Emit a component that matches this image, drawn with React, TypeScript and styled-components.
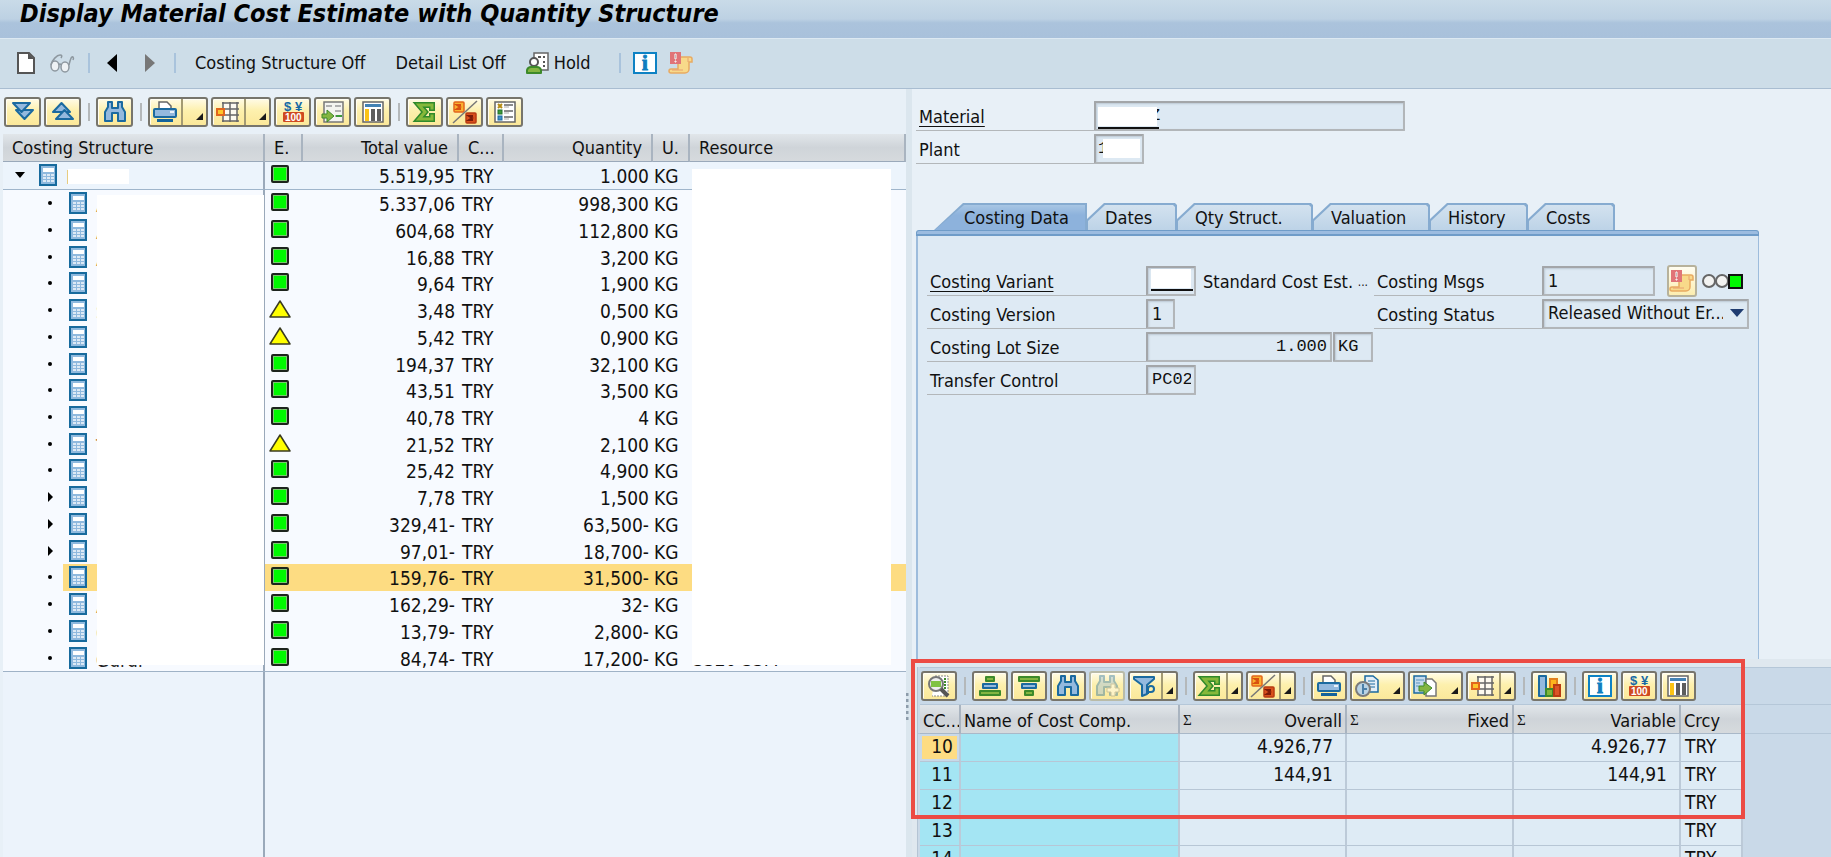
import React from 'react';
import styled, { createGlobalStyle, css } from 'styled-components';

const GlobalStyle = createGlobalStyle`
  *, *::before, *::after { box-sizing: border-box; }
  body {
    margin: 0;
    background: #e8f0f7;
    color: #111;
    font-family: "DejaVu Sans Condensed", "Noto Sans", sans-serif;
    font-size: 18px;
    line-height: 24px;
  }
  button, input, select { font: inherit; color: inherit; }
  button { cursor: pointer; }
  svg { overflow: visible; }
`;

/* ---------- page frame ---------- */

const Page = styled.div`
  display: flex;
  flex-direction: column;
  height: 100vh;
  overflow: hidden;
`;

const TitleBar = styled.header`
  flex: none;
  height: 39px;
  padding: 0 20px;
  background: linear-gradient(#c9dbe8, #bdd1e3 50%, #abc3dc 60%, #a9c1db);
  border-bottom: 1px solid #dde9f2;
`;

const Title = styled.h1`
  margin: 0;
  font-size: 25px;
  line-height: 28px;
  font-weight: bold;
  font-style: italic;
  color: #000;
  white-space: nowrap;
`;

const AppToolbar = styled.div`
  flex: none;
  display: flex;
  align-items: center;
  height: 50px;
  padding: 0 16px 1px;
  background: #cddde8;
  border-bottom: 1px solid #a9bdd1;
`;

const FlatButton = styled.button<{ $before?: number }>`
  display: flex;
  align-items: center;
  gap: 4px;
  margin-left: ${(p) => p.$before ?? 0}px;
  padding: 0;
  border: 0;
  background: none;
  white-space: nowrap;
`;

const FlatRule = styled.span<{ $before: number }>`
  width: 2px;
  height: 20px;
  margin-left: ${(p) => p.$before}px;
  background: #a9c3dc;
`;

const Workspace = styled.main`
  flex: 1;
  min-height: 0;
  display: grid;
  grid-template-columns: minmax(0, 906fr) 6px minmax(0, 919fr);
`;

const Splitter = styled.div`
  display: flex;
  align-items: flex-end;
  padding-bottom: 137px;
  background: #dbe6ee;
`;

/* ---------- toolbars ---------- */

const ToolRow = styled.div<{ $detail?: boolean }>`
  flex: none;
  display: flex;
  gap: 3px;
  align-items: center;
  height: ${(p) => (p.$detail ? 38 : 45)}px;
  padding: 0 ${(p) => (p.$detail ? 1 : 4)}px;
  ${(p) =>
    p.$detail &&
    css`
      border-top: 1px solid #b5c7d8;
      border-bottom: 1px solid #b5c7d8;
    `}
`;

const ToolButton = styled.button<{ $wide?: boolean }>`
  display: flex;
  justify-content: center;
  align-items: flex-start;
  width: ${(p) => (p.$wide ? 37 : 36)}px;
  height: 30px;
  padding: 2px 0 0;
  border: 2px solid #77756c;
  border-radius: 3px;
  background: linear-gradient(#fffbe6, #fdf0ad 45%, #fbe89a);
  box-shadow: inset 1px 1px 0 #fffdf2;

  &:disabled {
    border-color: #b9bba8;
    cursor: default;
  }
  &:disabled svg {
    opacity: 0.4;
  }
`;

const MenuButton = styled(ToolButton)<{ $size: number }>`
  justify-content: flex-start;
  width: ${(p) => p.$size}px;
  padding-left: 3px;
  gap: 4px;
`;

const MenuArrow = styled.span<{ $divider?: boolean }>`
  display: flex;
  align-items: flex-end;
  justify-content: flex-end;
  align-self: stretch;
  flex: 1;
  margin-top: -2px;
  padding: 0 3px 5px 0;
  border-left: ${(p) => (p.$divider ? '2px solid #a39a73' : '0')};
`;

const ToolRule = styled.span`
  width: 2px;
  height: 18px;
  margin: 0 3px 0 4px;
  background: #b4b8ba;
`;

const MenuArrowSvg = styled.svg`
  width: 7px;
  height: 7px;
`;

const Corner = () => (
  <MenuArrowSvg viewBox="0 0 7 7" aria-hidden="true">
    <path d="M7 0V7H0z" fill="#1a1a1a" />
  </MenuArrowSvg>
);

const Icon24 = styled.svg`
  width: 24px;
  height: 22px;
  flex: none;
`;

/* ---------- icon drawings ---------- */

type IconProps = { children: React.ReactNode };
const Draw = ({ children }: IconProps) => (
  <Icon24 viewBox="0 0 24 22" aria-hidden="true">
    {children}
  </Icon24>
);

const blue = { fill: '#94b9de', stroke: '#1b6aa0', strokeWidth: 2, strokeLinejoin: 'round' as const };
const green = { fill: '#84b541', stroke: '#3d8a2a', strokeWidth: 2, strokeLinejoin: 'round' as const };

const ExpandIcon = () => (
  <Draw>
    <path d="M5 9h17l-8.500 9z" {...blue} />
    <path d="M2 2h17l-8.500 9z" {...blue} />
  </Draw>
);
const CollapseIcon = () => (
  <Draw>
    <path d="M2 11h17l-8.500-9z" {...blue} />
    <path d="M5 18h17l-8.500-9z" {...blue} />
  </Draw>
);
const FindShape = () => (
  <path d="M2 20V11L5 6V1h4v6h6V1h4v5l3 5v9h-7v-8h-6v8z" {...blue} />
);
const FindIcon = () => (
  <Draw>
    <FindShape />
  </Draw>
);
const FindNextIcon = () => (
  <Draw>
    <FindShape />
    <path d="M16 9h4v4h4v4h-4v4h-4v-4h-4v-4h4z" fill="#fff" stroke="#888" />
  </Draw>
);
const PrintIcon = () => (
  <Draw>
    <path d="M6 9V1h8l4 4v4z" fill="#fff" stroke="#666" strokeWidth="1.500" />
    <rect x="1" y="8" width="22" height="8" rx="1" {...blue} />
    <rect x="17" y="10" width="4" height="2" fill="#e9f2fa" />
    <rect x="4" y="18" width="16" height="3" fill="#13639b" />
  </Draw>
);
const LayoutIcon = () => (
  <Draw>
    <rect x="7" y="2" width="14" height="18" fill="#fdfaf0" />
    <path d="M6 2h17M9 8h14M9 14h14M6 20h17M7 1v6M7 14v7M14 1v20M21 1v20" fill="none" stroke="#666" strokeWidth="1.500" />
    <rect x="1" y="8" width="7" height="6" fill="#fdc62b" stroke="#e2661c" strokeWidth="2" />
  </Draw>
);
const CurrencyText = styled.text<{ $size: number }>`
  font-family: 'Liberation Sans', sans-serif;
  font-weight: bold;
  font-size: ${(p) => p.$size}px;
`;
const CurrencyIcon = () => (
  <Draw>
    <CurrencyText $size={13} x="3" y="10" fill="#1769a6">
      $
    </CurrencyText>
    <CurrencyText $size={13} x="14" y="10" fill="#1769a6">
      ¥
    </CurrencyText>
    <rect x="2" y="11" width="21" height="10" rx="1" fill="#cf4a20" />
    <CurrencyText $size={10} x="4" y="20" fill="#fff">
      100
    </CurrencyText>
  </Draw>
);
const ImportIcon = () => (
  <Draw>
    <rect x="3" y="1" width="19" height="20" fill="#f4f4f0" stroke="#777" strokeWidth="1.500" />
    <path d="M5 5h6M14 5h6M14 10h6M14 15h6" stroke="#b0b0b0" strokeWidth="2" />
    <path d="M15 15h6" stroke="#3d9a3a" strokeWidth="2" />
    <path d="M1 13h5V9l7 6-7 6v-4H1z" {...green} strokeWidth="1" />
  </Draw>
);
const ColumnsIcon = () => (
  <Draw>
    <rect x="2" y="1" width="20" height="20" fill="#fff" stroke="#666" strokeWidth="1.500" />
    <rect x="4" y="3" width="16" height="3" fill="#4382b4" />
    <rect x="4" y="8" width="4" height="12" fill="#fbc314" />
    <rect x="10" y="8" width="4" height="12" fill="#5d5d5d" />
    <rect x="16" y="8" width="4" height="12" fill="#5d5d5d" />
  </Draw>
);
const sumLine = 'M19 7V4H6l6 7-6 7h13v-3';
const SumIcon = () => (
  <Draw>
    <path d={sumLine} fill="none" stroke="#2f8a2b" strokeWidth="6" strokeLinecap="square" />
    <path d={sumLine} fill="none" stroke="#86b83a" strokeWidth="3" strokeLinecap="square" />
  </Draw>
);
const SubtotalIcon = () => (
  <Draw>
    <rect x="1" y="1" width="10" height="10" rx="1" fill="#f9b12f" stroke="#e2661c" strokeWidth="1.500" />
    <path d="M8 4H4l3 2-3 2h4" fill="none" stroke="#d8500f" strokeWidth="2" />
    <rect x="13" y="12" width="10" height="10" rx="1" fill="#d9501c" stroke="#b83b12" strokeWidth="1.500" />
    <path d="M20 15h-4l3 2-3 2h4" fill="none" stroke="#7d1c08" strokeWidth="2" />
    <path d="M0 22L24 0" stroke="#777" strokeWidth="1.500" />
  </Draw>
);
const ChecklistIcon = () => (
  <Draw>
    <rect x="2" y="1" width="20" height="20" fill="#fff" stroke="#666" strokeWidth="1.500" />
    <path d="M11 4h9M11 10h9M11 16h9" stroke="#666" strokeWidth="1.500" />
    <path d="M11 6h5M11 12h5M11 18h5" stroke="#aaa" />
    <path d="M5 3l4 4M9 3l-4 4" stroke="#b58b12" strokeWidth="2" />
    <rect x="5" y="9" width="4" height="4" fill="#3d9a3a" stroke="#20702a" />
    <rect x="5" y="15" width="4" height="4" fill="#3f8fc7" stroke="#1b6aa0" />
  </Draw>
);
const DetailsIcon = () => (
  <Draw>
    <path d="M8 1h13v20H5" fill="#fff" stroke="#888" strokeDasharray="2 1" />
    <path d="M18 3v12" stroke="#3d8a2a" strokeWidth="2" strokeDasharray="2 1" />
    <circle cx="9" cy="9" r="7" fill="#eee" stroke="#777" strokeWidth="2" />
    <path d="M4 6h10v6H4z" fill="#7fc241" />
    <path d="M14 14l7 7" stroke="#555" strokeWidth="4" />
  </Draw>
);
const SortUpIcon = () => (
  <Draw>
    <rect x="8" y="2" width="8" height="4" {...green} />
    <rect x="5" y="9" width="14" height="4" {...blue} />
    <rect x="2" y="16" width="20" height="4" {...green} />
  </Draw>
);
const SortDownIcon = () => (
  <Draw>
    <rect x="2" y="2" width="20" height="4" {...green} />
    <rect x="5" y="9" width="14" height="4" {...blue} />
    <rect x="8" y="16" width="8" height="4" {...green} />
  </Draw>
);
const FilterIcon = () => (
  <Draw>
    <path d="M1 2h20v2l-7 6v9l-5 2V10L1 4z" {...blue} />
    <path d="M15 19v-5a3 3 0 1 1 3 3h-3" fill="#fdf0ad" stroke="#1b6aa0" strokeWidth="2" />
  </Draw>
);
const ViewIcon = () => (
  <Draw>
    <path d="M10 1h8l5 4v12H10z" fill="#e3eef7" stroke="#1b6aa0" strokeWidth="1.500" />
    <path d="M13 6h7M13 9h7M13 12h7" stroke="#1b6aa0" />
    <circle cx="8" cy="14" r="7" fill="#b9d3e4" stroke="#7b7b7b" strokeWidth="2" />
    <path d="M8 9v10M8 14h4" stroke="#4b7fa8" strokeWidth="2" />
  </Draw>
);
const ExportIcon = () => (
  <Draw>
    <rect x="1" y="1" width="12" height="17" fill="#c4daed" stroke="#1b6aa0" strokeWidth="1.500" />
    <path d="M3 5h8M3 8h4M3 11h3" stroke="#5b94bf" />
    <path d="M13 4h6l4 4v13H13z" fill="#fff" stroke="#777" strokeWidth="1.500" />
    <path d="M6 11h5V7l8 6-8 7v-4H6z" {...green} strokeWidth="1" />
  </Draw>
);
const ChartIcon = () => (
  <Draw>
    <rect x="2" y="1" width="7" height="20" {...blue} />
    <rect x="13" y="4" width="7" height="10" fill="#fdb51c" stroke="#e2801c" strokeWidth="2" />
    <rect x="9" y="14" width="7" height="7" fill="#7fb53a" stroke="#3d8a2a" strokeWidth="2" />
    <rect x="17" y="10" width="6" height="11" fill="#dc5426" stroke="#b83b12" strokeWidth="2" />
  </Draw>
);
const InfoGlyph = styled.text`
  font-family: 'Liberation Serif', serif;
  font-weight: bold;
  font-size: 21px;
`;
const InfoIcon = () => (
  <Draw>
    <rect x="1" y="1" width="22" height="20" fill="#fff" stroke="#0e82c4" strokeWidth="2" />
    <InfoGlyph x="12" y="18" textAnchor="middle" fill="#0e7fc0" stroke="#0e7fc0">
      i
    </InfoGlyph>
  </Draw>
);
const LogIcon = () => (
  <Draw>
    <path
      d="M9 5h12a2 2 0 0 1 2 2v3h-3v7a4 4 0 0 1-4 4H2a2 2 0 0 1 0-4h7z"
      fill="#f8d98a"
      stroke="#e8aa62"
      strokeWidth="1.500"
    />
    <path d="M3 18h11M19 6v4" stroke="#e8a070" />
    <rect x="1" y="0" width="11" height="12" fill="#e07478" />
    <path d="M6 2h1v5H6zM6 9h1v1H6z" stroke="#fff" />
  </Draw>
);
const NewDocIcon = () => (
  <Icon24 viewBox="0 0 24 22" aria-hidden="true">
    <path d="M2 1h11l5 5v15H2z" fill="#fff" stroke="#555" strokeWidth="2" />
    <path d="M12 1v6h6z" fill="#555" />
  </Icon24>
);
const GlassesIcon = () => (
  <Draw>
    <g fill="none" stroke="#8d979f" strokeWidth="1.500">
      <ellipse cx="5" cy="14" rx="4" ry="5" fill="#eef2f5" />
      <ellipse cx="15" cy="15" rx="4" ry="5" fill="#eef2f5" />
      <path d="M9 13q1-2 2 0M1 13C2 8 7 3 10 3q3 0 1 3M19 13c1-4 2-9 4-8q1 1 0 3" />
    </g>
  </Draw>
);
const ArrowSvg = styled.svg`
  width: 10px;
  height: 18px;
`;
const HoldIcon = () => (
  <Draw>
    <rect x="8" y="1" width="14" height="17" fill="#fff" stroke="#666" strokeWidth="1.500" />
    <path d="M12 5h3M17 5h2M17 10h2M17 14h2" stroke="#555" strokeWidth="2" />
    <circle cx="8" cy="10" r="4" fill="#fff" stroke="#555" strokeWidth="2" />
    <path d="M1 21v-3q1-3 4-3h6q3 0 4 3v3z" {...green} />
  </Draw>
);

/* ---------- costing structure tree ---------- */

const Pane = styled.section`
  display: flex;
  flex-direction: column;
  min-width: 0;
  min-height: 0;
`;

const TreeArea = styled.div`
  position: relative;
  flex: 1;
  display: flex;
  flex-direction: column;
  min-height: 0;
  margin-left: 3px;
  background: #ecf3fb;
`;

const TreeTable = styled.table`
  width: 100%;
  height: 538px;
  table-layout: fixed;
  border-collapse: separate;
  border-spacing: 0;
  border-bottom: 1px solid #9fb2c6;
  background: #f7faff;
`;

const headCell = css`
  overflow: hidden;
  font-weight: normal;
  white-space: nowrap;
  background: linear-gradient(#e1e6ea, #cfd4d9 50%, #d6dadd);
  border-right: 2px solid #a9b4c0;
`;

const TreeHead = styled.th<{ $align?: string }>`
  ${headCell}
  height: 28px;
  padding: 0 9px;
  text-align: ${(p) => p.$align ?? 'left'};
  border-bottom: 1px solid #9aa9ba;
`;

const TreeRow = styled.tr<{ $root?: boolean; $selected?: boolean }>`
  background: ${(p) => (p.$selected ? '#fddc82' : p.$root ? '#ecf4fc' : 'transparent')};
  td {
    border-bottom: ${(p) => (p.$root ? '1px solid #9fb5cb' : '0')};
  }
`;

const TreeCell = styled.td<{ $align?: string; $unit?: boolean }>`
  padding: 2px 4px 0 ${(p) => (p.$unit ? 1 : 3)}px;
  font-size: 19px;
  text-align: ${(p) => p.$align ?? 'left'};
  white-space: nowrap;
  overflow: hidden;
`;

const NodeCell = styled.td<{ $root?: boolean; $selected?: boolean }>`
  padding: 0 0 0 ${(p) => (p.$root ? 10 : 40)}px;
  overflow: hidden;
  border-right: 2px solid #9aa9ba;
  background: ${(p) => (p.$selected ? 'linear-gradient(90deg, #f7faff 60px, #fddc82 60px)' : 'none')};
`;

const NodeLine = styled.div`
  display: flex;
  align-items: center;
  height: 22px;
`;

const NodeText = styled.span<{ $dark?: boolean }>`
  padding: 4px 0 0 9px;
  font-size: 19px;
  color: ${(p) => (p.$dark ? '#222' : '#c58a50')};
`;

const StatusCell = styled.td`
  padding: 0 0 2px 6px;
  line-height: 0;
`;

const Cover = styled.div<{ $left: number; $top: number; $width: number; $height: number }>`
  position: absolute;
  left: ${(p) => p.$left}px;
  top: ${(p) => p.$top}px;
  width: ${(p) => p.$width}px;
  height: ${(p) => p.$height}px;
  background: #fff;
`;

const ColumnEdge = styled.div`
  flex: 1;
  width: 262px;
  border-right: 2px solid #9aa9ba;
`;

const MarkerSvg = styled.svg`
  width: 14px;
  height: 14px;
  margin-right: 12px;
  flex: none;
`;
const CalcSvg = styled.svg`
  width: 18px;
  height: 22px;
  flex: none;
`;
const StatusSvg = styled.svg`
  width: 20px;
  height: 18px;
`;
const DotsSvg = styled.svg`
  width: 3px;
  height: 28px;
`;

const Marker = ({ kind }: { kind: 'open' | 'closed' | 'leaf' }) => (
  <MarkerSvg viewBox="0 0 14 14" aria-hidden="true">
    {kind === 'open' && <path d="M2 4h10L7 10z" />}
    {kind === 'closed' && <path d="M5 2l5 5-5 5z" />}
    {kind === 'leaf' && <circle cx="7" cy="7" r="2" />}
  </MarkerSvg>
);

const CalcIcon = () => (
  <CalcSvg viewBox="0 0 18 22" aria-hidden="true">
    <rect x="1" y="1" width="16" height="20" fill="#8fb9de" stroke="#176a9d" strokeWidth="2" />
    <rect x="4" y="4" width="11" height="4" fill="#fff" />
    <path d="M4 11h11M4 14h11M4 17h11" stroke="#dce9f5" strokeWidth="2" strokeDasharray="3 1" />
  </CalcSvg>
);

const Status = ({ warn }: { warn?: boolean }) => (
  <StatusSvg viewBox="0 0 20 18" role="img" aria-label={warn ? 'Warning' : 'OK'}>
    {warn ? (
      <path d="M9 1L19 17H-1z" fill="#ffff00" stroke="#3a3a20" strokeWidth="1.500" strokeLinejoin="round" />
    ) : (
      <>
        <rect x="1" y="1" width="16" height="16" rx="1" fill="#7cc96f" stroke="#1d241d" strokeWidth="2" />
        <rect x="3" y="3" width="12" height="12" fill="#00fa00" />
      </>
    )}
  </StatusSvg>
);

type Node = {
  kind: 'open' | 'closed' | 'leaf';
  text: string;
  total: string;
  qty: string;
  warn?: boolean;
  selected?: boolean;
};

const nodes: Node[] = [
  { kind: 'open', text: 'I', total: '5.519,95', qty: '1.000' },
  { kind: 'leaf', text: 'A', total: '5.337,06', qty: '998,300' },
  { kind: 'leaf', text: 'A', total: '604,68', qty: '112,800' },
  { kind: 'leaf', text: 'A', total: '16,88', qty: '3,200' },
  { kind: 'leaf', text: 'I', total: '9,64', qty: '1,900' },
  { kind: 'leaf', text: 'S', total: '3,48', qty: '0,500', warn: true },
  { kind: 'leaf', text: 'I', total: '5,42', qty: '0,900', warn: true },
  { kind: 'leaf', text: 'I', total: '194,37', qty: '32,100' },
  { kind: 'leaf', text: 'I', total: '43,51', qty: '3,500' },
  { kind: 'leaf', text: 'I', total: '40,78', qty: '4' },
  { kind: 'leaf', text: 'T', total: '21,52', qty: '2,100', warn: true },
  { kind: 'leaf', text: 'I', total: '25,42', qty: '4,900' },
  { kind: 'closed', text: 'I', total: '7,78', qty: '1,500' },
  { kind: 'closed', text: 'I', total: '329,41-', qty: '63,500-' },
  { kind: 'closed', text: 'I', total: '97,01-', qty: '18,700-' },
  { kind: 'leaf', text: 'I', total: '159,76-', qty: '31,500-', selected: true },
  { kind: 'leaf', text: 'A', total: '162,29-', qty: '32-' },
  { kind: 'leaf', text: 'G', total: '13,79-', qty: '2,800-' },
  { kind: 'leaf', text: 'Gurur', total: '84,74-', qty: '17,200-' },
];

const CostingTree = () => (
  <Pane>
    <ToolRow>
      <ToolButton $wide aria-label="Expand">
        <ExpandIcon />
      </ToolButton>
      <ToolButton $wide aria-label="Collapse">
        <CollapseIcon />
      </ToolButton>
      <ToolRule />
      <ToolButton $wide aria-label="Find">
        <FindIcon />
      </ToolButton>
      <ToolRule />
      <MenuButton $size={60} aria-label="Print">
        <PrintIcon />
        <MenuArrow $divider>
          <Corner />
        </MenuArrow>
      </MenuButton>
      <MenuButton $size={60} aria-label="Layout">
        <LayoutIcon />
        <MenuArrow $divider>
          <Corner />
        </MenuArrow>
      </MenuButton>
      <ToolButton $wide aria-label="Currency">
        <CurrencyIcon />
      </ToolButton>
      <ToolButton $wide aria-label="Import">
        <ImportIcon />
      </ToolButton>
      <ToolButton $wide aria-label="Columns">
        <ColumnsIcon />
      </ToolButton>
      <ToolRule />
      <ToolButton $wide aria-label="Sum">
        <SumIcon />
      </ToolButton>
      <ToolButton $wide aria-label="Subtotal">
        <SubtotalIcon />
      </ToolButton>
      <ToolButton $wide aria-label="Legend">
        <ChecklistIcon />
      </ToolButton>
    </ToolRow>
    <TreeArea>
      <TreeTable>
        <colgroup>
          <col width="262" />
          <col width="38" />
          <col width="156" />
          <col width="45" />
          <col width="149" />
          <col width="37" />
          <col />
        </colgroup>
        <thead>
          <tr>
            <TreeHead>Costing Structure</TreeHead>
            <TreeHead>E.</TreeHead>
            <TreeHead $align="right">Total value</TreeHead>
            <TreeHead>C...</TreeHead>
            <TreeHead $align="right">Quantity</TreeHead>
            <TreeHead>U.</TreeHead>
            <TreeHead>Resource</TreeHead>
          </tr>
        </thead>
        <tbody>
          {nodes.map((n, i) => {
            const root = n.kind === 'open';
            return (
              <TreeRow key={i} $root={root} $selected={n.selected}>
                <NodeCell $root={root} $selected={n.selected}>
                  <NodeLine>
                    <Marker kind={n.kind} />
                    <CalcIcon />
                    <NodeText $dark={n.text.length > 1}>{n.text}</NodeText>
                  </NodeLine>
                </NodeCell>
                <StatusCell>
                  <Status warn={n.warn} />
                </StatusCell>
                <TreeCell $align="right">{n.total}</TreeCell>
                <TreeCell>TRY</TreeCell>
                <TreeCell $align="right">{n.qty}</TreeCell>
                <TreeCell $unit>KG</TreeCell>
                <TreeCell>{i === nodes.length - 1 ? '3320 33M' : ''}</TreeCell>
              </TreeRow>
            );
          })}
        </tbody>
      </TreeTable>
      <ColumnEdge />
      <Cover $left={65} $top={35} $width={61} $height={15} />
      <Cover $left={94} $top={61} $width={167} $height={470} />
      <Cover $left={689} $top={35} $width={199} $height={496} />
    </TreeArea>
  </Pane>
);

/* ---------- header form and tabs ---------- */

const KeyForm = styled.form`
  flex: none;
  display: flex;
  flex-direction: column;
  gap: 3px;
  padding: 12px 4px 0;
`;

const FormRow = styled.div`
  display: flex;
  height: 30px;
`;

const FieldLabel = styled.label<{ $width: number; $link?: boolean }>`
  flex: 0 0 ${(p) => p.$width}px;
  height: 30px;
  padding: 4px 3px 0;
  border-bottom: 1px solid #b3b7ba;
  white-space: nowrap;
  text-decoration: ${(p) => (p.$link ? 'underline' : 'none')};
  text-underline-offset: 3px;
`;

const fieldBox = css`
  height: 30px;
  border: 2px solid #b2b6b9;
  border-top-color: #a3a6a9;
  border-left-color: #a3a6a9;
  border-radius: 1px;
  background: #dde9f3;
  box-shadow: inset 1px 1px 2px #bcc8d3;
  outline: 0;
`;

const FieldWrap = styled.span<{ $width: number }>`
  position: relative;
  flex: 0 0 ${(p) => p.$width}px;
`;

const Field = styled.input<{ $indent?: number; $sans?: boolean }>`
  ${fieldBox}
  display: block;
  width: 100%;
  padding: 0 3px 2px ${(p) => p.$indent ?? 4}px;
  font-family: ${(p) => (p.$sans ? 'inherit' : '"Liberation Mono", monospace')};
  font-size: ${(p) => (p.$sans ? 18 : 17)}px;
  text-align: inherit;
`;

const NumberWrap = styled(FieldWrap)`
  text-align: right;
  margin-right: 1px;
`;

const Mask = styled.span<{ $left: number; $top: number; $width: number; $line?: boolean }>`
  position: absolute;
  left: ${(p) => p.$left}px;
  top: ${(p) => p.$top}px;
  width: ${(p) => p.$width}px;
  height: 19px;
  background: #fff;

  &::after {
    content: '';
    display: ${(p) => (p.$line ? 'block' : 'none')};
    margin: 20px -2px 0 0;
    border-top: 2px solid #111;
  }
`;

const TabArea = styled.div`
  flex: 1;
  min-height: 0;
  display: flex;
  flex-direction: column;
  max-width: 847px;
  padding-left: 4px;
  margin-top: 39px;
`;

const TabList = styled.div`
  display: flex;
  padding-left: 18px;
  height: 27px;
`;

const Tab = styled.button<{ $width: number; $active?: boolean }>`
  --shape: ${(p) =>
    p.$active
      ? 'polygon(0 100%, 29px 0, 100% 0, 100% 100%)'
      : 'polygon(0 16px, 17px 0, calc(100% - 2px) 0, 100% 2px, 100% 100%, 0 100%)'};
  position: relative;
  isolation: isolate;
  width: ${(p) => p.$width}px;
  height: 27px;
  padding: 3px 0 0 ${(p) => (p.$active ? 30 : 18)}px;
  border: 0;
  background: none;
  text-align: left;
  white-space: nowrap;

  &::before,
  &::after {
    content: '';
    position: absolute;
    inset: 0;
    z-index: -1;
    clip-path: var(--shape);
    background: #86abd0;
  }
  &::after {
    inset: 2px 2px 0 1px;
    background: ${(p) =>
      p.$active ? 'linear-gradient(#a8c6e4, #8db2dc 40%)' : 'linear-gradient(#d3e2ef, #bdd3e7)'};
  }
`;

const TabBand = styled.div`
  flex: none;
  height: 6px;
  border: 1px solid #6f9cc8;
  border-bottom-width: 2px;
  border-radius: 3px 3px 0 0;
  background: #9cbce0;
`;

const TabPanel = styled.div`
  flex: 1;
  min-height: 0;
  display: flex;
  padding: 30px 8px 0 9px;
  border: 2px solid #9dbcdc;
  border-width: 0 1px 0 2px;
  background: #deeaf4;
`;

const FormColumn = styled.div<{ $width: number }>`
  flex: 0 0 ${(p) => p.$width}px;
  display: flex;
  flex-direction: column;
  gap: 3px;
`;

const Beside = styled.span`
  display: flex;
  justify-content: space-between;
  width: 176px;
  padding: 4px 4px 0 7px;
  white-space: nowrap;
`;

const Ellipsis = styled.span`
  font-size: 12px;
`;

const LogButton = styled.button`
  display: flex;
  align-items: center;
  justify-content: center;
  width: 30px;
  height: 32px;
  margin: -1px 4px 0 12px;
  padding: 0;
  border: 2px solid #b7b29b;
  border-radius: 3px;
  background: linear-gradient(#fffdf0, #fcedb0);
`;

const SignalSvg = styled.svg`
  width: 43px;
  height: 30px;
`;

const StatusSelect = styled.select`
  ${fieldBox}
  width: 100%;
  padding: 0 24px 2px 4px;
  appearance: none;
`;

const SelectArrow = styled.svg`
  position: absolute;
  right: 5px;
  top: 10px;
  width: 14px;
  height: 8px;
  pointer-events: none;
`;

const tabs = [
  { name: 'Costing Data', width: 153 },
  { name: 'Dates', width: 90 },
  { name: 'Qty Struct.', width: 136 },
  { name: 'Valuation', width: 117 },
  { name: 'History', width: 98 },
  { name: 'Costs', width: 87 },
];

const CostingHeader = () => (
  <>
    <KeyForm>
      <FormRow>
        <FieldLabel htmlFor="material" $width={178} $link>
          Material
        </FieldLabel>
        <FieldWrap $width={311}>
          <Field id="material" readOnly defaultValue="Z" $indent={54} />
          <Mask $left={4} $top={6} $width={59} $line />
        </FieldWrap>
      </FormRow>
      <FormRow>
        <FieldLabel htmlFor="plant" $width={178}>
          Plant
        </FieldLabel>
        <FieldWrap $width={50}>
          <Field id="plant" readOnly defaultValue="1" $indent={2} />
          <Mask $left={9} $top={5} $width={37} />
        </FieldWrap>
      </FormRow>
    </KeyForm>
    <TabArea>
      <TabList role="tablist">
        {tabs.map((t, i) => (
          <Tab key={t.name} role="tab" aria-selected={i === 0} $width={t.width} $active={i === 0}>
            {t.name}
          </Tab>
        ))}
      </TabList>
      <TabBand />
      <TabPanel role="tabpanel">
        <FormColumn $width={447}>
          <FormRow>
            <FieldLabel htmlFor="variant" $width={219} $link>
              Costing Variant
            </FieldLabel>
            <FieldWrap $width={50}>
              <Field id="variant" readOnly />
              <Mask $left={5} $top={3} $width={40} $line />
            </FieldWrap>
            <Beside>
              <span>Standard Cost Est.</span>
              <Ellipsis>...</Ellipsis>
            </Beside>
          </FormRow>
          <FormRow>
            <FieldLabel htmlFor="version" $width={219}>
              Costing Version
            </FieldLabel>
            <FieldWrap $width={29}>
              <Field id="version" readOnly defaultValue="1" $sans />
            </FieldWrap>
          </FormRow>
          <FormRow>
            <FieldLabel htmlFor="lot" $width={219}>
              Costing Lot Size
            </FieldLabel>
            <NumberWrap $width={186}>
              <Field id="lot" readOnly defaultValue="1.000" />
            </NumberWrap>
            <FieldWrap $width={40}>
              <Field aria-label="Lot size unit" readOnly defaultValue="KG" $indent={3} />
            </FieldWrap>
          </FormRow>
          <FormRow>
            <FieldLabel htmlFor="transfer" $width={219}>
              Transfer Control
            </FieldLabel>
            <FieldWrap $width={50}>
              <Field id="transfer" readOnly defaultValue="PC02" />
            </FieldWrap>
          </FormRow>
        </FormColumn>
        <FormColumn $width={376}>
          <FormRow>
            <FieldLabel htmlFor="msgs" $width={168}>
              Costing Msgs
            </FieldLabel>
            <FieldWrap $width={113}>
              <Field id="msgs" readOnly defaultValue="1" $sans />
            </FieldWrap>
            <LogButton type="button" aria-label="Message log">
              <LogIcon />
            </LogButton>
            <SignalSvg viewBox="0 0 43 30" role="img" aria-label="Green">
              <circle cx="8" cy="15" r="6" fill="#f3f3f1" stroke="#666" strokeWidth="2" />
              <circle cx="21" cy="15" r="6" fill="#f3f3f1" stroke="#666" strokeWidth="2" />
              <rect x="28" y="9" width="13" height="13" fill="#00f800" stroke="#111" strokeWidth="2" />
            </SignalSvg>
          </FormRow>
          <FormRow>
            <FieldLabel htmlFor="status" $width={168}>
              Costing Status
            </FieldLabel>
            <FieldWrap $width={207}>
              <StatusSelect id="status">
                <option>Released Without Er...</option>
              </StatusSelect>
              <SelectArrow viewBox="0 0 14 8" aria-hidden="true">
                <path d="M0 0h14L7 8z" fill="#1f3c70" />
              </SelectArrow>
            </FieldWrap>
          </FormRow>
        </FormColumn>
      </TabPanel>
    </TabArea>
  </>
);

/* ---------- cost component list ---------- */

const ListPane = styled.section`
  position: relative;
  flex: none;
  height: 198px;
  padding: 8px 0 0 5px;
  background: #dfe8ef;
`;

const ListBody = styled.div`
  height: 190px;
  overflow: hidden;
  padding-left: 2px;
  border-left: 1px solid #b5c4d4;
  background: linear-gradient(#b5c7d8, #b5c7d8) 0 66px / 100% 1px no-repeat #c9d9e8;
`;

const ListTable = styled.table`
  width: 823px;
  table-layout: fixed;
  border-collapse: separate;
  border-spacing: 0;
`;

const ListHead = styled.th`
  ${headCell}
  height: 29px;
  padding: 3px 3px 0;
  text-align: left;
  border-bottom: 1px solid #a9b8c8;
`;

const SumHead = styled.div`
  display: flex;
  justify-content: space-between;
`;

const SumMark = styled.span`
  font-family: 'Liberation Serif', serif;
  font-size: 15px;
  line-height: 22px;
`;

const ListCell = styled.td<{ $key?: boolean; $current?: boolean; $number?: boolean }>`
  height: 28px;
  padding: 0 ${(p) => (p.$key ? 6 : p.$number ? 12 : 4)}px 3px;
  font-size: 19px;
  text-align: ${(p) => (p.$number || p.$key ? 'right' : 'left')};
  border-right: 2px solid #bccad8;
  border-bottom: 1px solid #b7c6d5;
  background: ${(p) => (p.$current ? '#fddc82' : p.$key ? '#a4e5f3' : '#deebf5')};
  box-shadow: ${(p) => (p.$current ? 'inset 0 0 0 2px #c9d9e8' : 'none')};
`;

const Highlight = styled.div`
  position: absolute;
  top: 0;
  left: -1px;
  width: 834px;
  height: 160px;
  border: 4px solid #ec4b44;
  pointer-events: none;
`;

const components = [
  { id: '10', overall: '4.926,77', variable: '4.926,77' },
  { id: '11', overall: '144,91', variable: '144,91' },
  { id: '12', overall: '', variable: '' },
  { id: '13', overall: '', variable: '' },
  { id: '14', overall: '', variable: '' },
];

const ComponentList = () => (
  <ListPane>
    <ListBody>
      <ToolRow $detail>
        <ToolButton aria-label="Details">
          <DetailsIcon />
        </ToolButton>
        <ToolRule />
        <ToolButton aria-label="Sort ascending">
          <SortUpIcon />
        </ToolButton>
        <ToolButton aria-label="Sort descending">
          <SortDownIcon />
        </ToolButton>
        <ToolButton aria-label="Find">
          <FindIcon />
        </ToolButton>
        <ToolButton aria-label="Find next" disabled>
          <FindNextIcon />
        </ToolButton>
        <MenuButton $size={50} aria-label="Filter">
          <FilterIcon />
          <MenuArrow $divider>
            <Corner />
          </MenuArrow>
        </MenuButton>
        <ToolRule />
        <MenuButton $size={50} aria-label="Sum">
          <SumIcon />
          <MenuArrow $divider>
            <Corner />
          </MenuArrow>
        </MenuButton>
        <MenuButton $size={50} aria-label="Subtotal">
          <SubtotalIcon />
          <MenuArrow $divider>
            <Corner />
          </MenuArrow>
        </MenuButton>
        <ToolRule />
        <ToolButton aria-label="Print">
          <PrintIcon />
        </ToolButton>
        <MenuButton $size={55} aria-label="Views">
          <ViewIcon />
          <MenuArrow>
            <Corner />
          </MenuArrow>
        </MenuButton>
        <MenuButton $size={55} aria-label="Export">
          <ExportIcon />
          <MenuArrow>
            <Corner />
          </MenuArrow>
        </MenuButton>
        <MenuButton $size={50} aria-label="Layout">
          <LayoutIcon />
          <MenuArrow $divider>
            <Corner />
          </MenuArrow>
        </MenuButton>
        <ToolRule />
        <ToolButton aria-label="Graphic">
          <ChartIcon />
        </ToolButton>
        <ToolRule />
        <ToolButton aria-label="Information">
          <InfoIcon />
        </ToolButton>
        <ToolButton aria-label="Currency">
          <CurrencyIcon />
        </ToolButton>
        <ToolButton aria-label="Columns">
          <ColumnsIcon />
        </ToolButton>
      </ToolRow>
      <ListTable>
        <colgroup>
          <col width="41" />
          <col width="219" />
          <col width="167" />
          <col width="167" />
          <col width="167" />
          <col width="62" />
        </colgroup>
        <thead>
          <tr>
            <ListHead>CC...</ListHead>
            <ListHead>Name of Cost Comp.</ListHead>
            {['Overall', 'Fixed', 'Variable'].map((h) => (
              <ListHead key={h}>
                <SumHead>
                  <SumMark>Σ</SumMark>
                  {h}
                </SumHead>
              </ListHead>
            ))}
            <ListHead>Crcy</ListHead>
          </tr>
        </thead>
        <tbody>
          {components.map((c, i) => (
            <tr key={c.id}>
              <ListCell $key $current={i === 0}>
                {c.id}
              </ListCell>
              <ListCell $key />
              <ListCell $number>{c.overall}</ListCell>
              <ListCell $number />
              <ListCell $number>{c.variable}</ListCell>
              <ListCell>TRY</ListCell>
            </tr>
          ))}
        </tbody>
      </ListTable>
    </ListBody>
    <Highlight />
  </ListPane>
);

export default function App() {
  return (
    <>
      <GlobalStyle />
      <Page>
        <TitleBar>
          <Title>Display Material Cost Estimate with Quantity Structure</Title>
        </TitleBar>
        <AppToolbar>
          <FlatButton aria-label="Create">
            <NewDocIcon />
          </FlatButton>
          <FlatButton aria-label="Display" $before={10}>
            <GlassesIcon />
          </FlatButton>
          <FlatRule $before={14} />
          <FlatButton aria-label="Previous" $before={17}>
            <ArrowSvg viewBox="0 0 10 18">
              <path d="M10 0v18L0 9z" />
            </ArrowSvg>
          </FlatButton>
          <FlatButton aria-label="Next" $before={28}>
            <ArrowSvg viewBox="0 0 10 18">
              <path d="M0 0v18l10-9z" fill="#777" />
            </ArrowSvg>
          </FlatButton>
          <FlatRule $before={19} />
          <FlatButton $before={19}>Costing Structure Off</FlatButton>
          <FlatButton $before={30}>Detail List Off</FlatButton>
          <FlatButton $before={20}>
            <HoldIcon />
            Hold
          </FlatButton>
          <FlatRule $before={28} />
          <FlatButton aria-label="Information" $before={12}>
            <InfoIcon />
          </FlatButton>
          <FlatButton aria-label="Log" $before={12}>
            <LogIcon />
          </FlatButton>
        </AppToolbar>
        <Workspace>
          <CostingTree />
          <Splitter>
            <DotsSvg viewBox="0 0 3 28" aria-hidden="true">
              <path d="M1 1v28" stroke="#8d9cab" strokeWidth="3" strokeDasharray="3 3" />
            </DotsSvg>
          </Splitter>
          <Pane>
            <CostingHeader />
            <ComponentList />
          </Pane>
        </Workspace>
      </Page>
    </>
  );
}
